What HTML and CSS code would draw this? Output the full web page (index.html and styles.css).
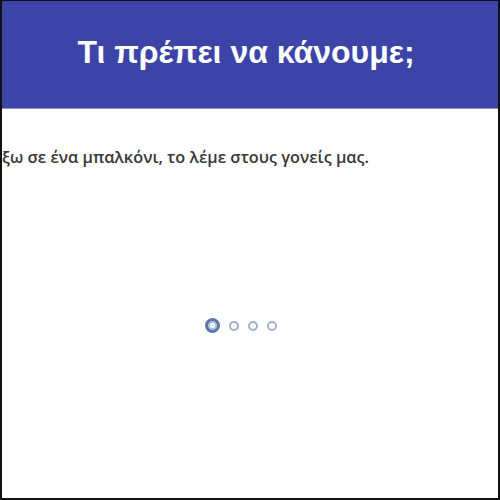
FILE: index.html
```html
<!DOCTYPE html>
<html lang="el">
<head>
<meta charset="utf-8">
<title>Τι πρέπει να κάνουμε;</title>
<link rel="stylesheet" href="styles.css">
</head>
<body>
<div class="frame">
  <header class="header">
    <h1 class="title">Τι πρέπει να κάνουμε;</h1>
  </header>
  <main class="slide">
    <p class="text">ξω σε ένα μπαλκόνι, το λέμε στους γονείς μας.</p>
    <div class="dots">
      <span class="dot active"></span>
      <span class="dot"></span>
      <span class="dot"></span>
      <span class="dot"></span>
    </div>
  </main>
</div>
</body>
</html>
```

FILE: styles.css
```css
html, body {
  margin: 0;
  padding: 0;
  background: #ffffff;
}
.frame {
  box-sizing: border-box;
  width: 500px;
  height: 500px;
  border: 2px solid #111111;
  border-top-width: 1px;
  display: flex;
  flex-direction: column;
  overflow: hidden;
  font-family: "Liberation Sans", Arial, sans-serif;
}
.header {
  background: #3c44a8;
  height: 107px;
  display: flex;
  align-items: center;
  justify-content: center;
  border-bottom: 1px solid #8c92cc;
}
.title {
  margin: 0 8px 4px 0;
  color: #ffffff;
  font-size: 32px;
  font-weight: 700;
}
.slide {
  flex: 1;
  display: flex;
  flex-direction: column;
}
.text {
  margin: 38px 0 0 0;
  padding-left: 0;
  font-family: "Open Sans", "Liberation Sans", sans-serif;
  font-weight: 600;
  font-size: 16.3px;
  color: #383838;
  line-height: 20px;
}
.dots {
  margin-top: 151px;
  display: flex;
  align-items: center;
  justify-content: center;
  gap: 9px;
  padding-right: 18px;
}
.dot {
  box-sizing: border-box;
  width: 10px;
  height: 10px;
  border-radius: 50%;
  border: 2px solid #a3b0c4;
  background: #ffffff;
}
.dot.active {
  width: 15px;
  height: 15px;
  border: 3px solid #5f77a0;
  box-shadow: inset 0 0 0 2px #a9c1e2, inset 0 0 0 4px #ffffff;
  background: #7f98c0;
}
```
